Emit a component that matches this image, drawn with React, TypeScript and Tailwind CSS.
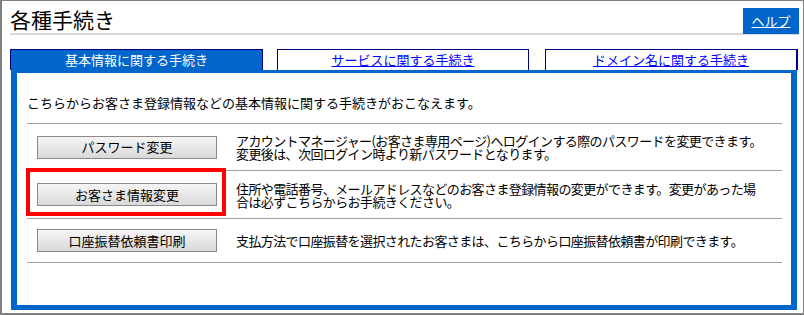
import React from "react";

const rows = [
  {
    label: "パスワード変更",
    lines: [
      "アカウントマネージャー(お客さま専用ページ)へログインする際のパスワードを変更できます。",
      "変更後は、次回ログイン時より新パスワードとなります。",
    ],
    marked: false,
  },
  {
    label: "お客さま情報変更",
    lines: [
      "住所や電話番号、メールアドレスなどのお客さま登録情報の変更ができます。変更があった場",
      "合は必ずこちらからお手続きください。",
    ],
    marked: true,
  },
  {
    label: "口座振替依頼書印刷",
    lines: ["支払方法で口座振替を選択されたお客さまは、こちらから口座振替依頼書が印刷できます。"],
    marked: false,
  },
];

export default function App() {
  return (
    <div
      className="w-[804px] h-[315px] bg-white border-t border-r border-l-2 border-b-2 border-[#808080] text-black overflow-hidden"
      style={{ fontFamily: '"Noto Sans CJK JP", "Noto Sans", sans-serif' }}
    >
      {/* Header */}
      <div className="ml-[8px] mr-[4px] h-[34px] flex items-end justify-between border-b-2 border-[#d9d9d9]">
        <h1 className="text-[21px] leading-[21px] pb-[3px] font-normal">各種手続き</h1>
        <a
          href="#"
          className="w-[56px] h-[26px] mb-[-1px] bg-[#0066cc] text-white text-[13px] leading-[26px] text-center underline"
        >
          ヘルプ
        </a>
      </div>

      {/* Tabs */}
      <div className="ml-[8px] mt-[14px] flex text-[13px] leading-[14px]">
        <div className="w-[253px] h-[21px] bg-[#0066cc] border-t border-x border-[#000080] text-white flex items-center justify-center">
          基本情報に関する手続き
        </div>
        <div className="ml-[14px] w-[252px] h-[21px] bg-white border-t border-x border-[#000080] flex items-center justify-center">
          <a href="#" className="text-[#0000ff] underline">
            サービスに関する手続き
          </a>
        </div>
        <div className="ml-[16px] w-[253px] h-[21px] bg-white border-t border-r-2 border-l border-[#000080] flex items-center justify-center">
          <a href="#" className="text-[#0000ff] underline">
            ドメイン名に関する手続き
          </a>
        </div>
      </div>

      {/* Panel */}
      <div className="ml-[9px] w-[786px] h-[240px] border-t-[3px] border-x-[6px] border-b-[5px] border-[#0066cc] pl-[10px] pr-[9px] text-[13px] leading-[14px]">
        <p className="pt-[23px] pb-[13px] border-b border-[#a0a0a0]">
          こちらからお客さま登録情報などの基本情報に関する手続きがおこなえます。
        </p>
        {rows.map((row, i) => (
          <div
            key={row.label}
            className={`flex items-center border-b border-[#a0a0a0] ${
              i === 0 ? "h-[47px]" : i === 1 ? "h-[48px]" : "h-[44px]"
            }`}
          >
            <div className="relative ml-[10px]">
              <button className="w-[180px] h-[23px] border border-[#8a8a8a] bg-gradient-to-b from-[#f6f6f6] to-[#d9d9d9] text-[13px] leading-[14px] text-black">
                {row.label}
              </button>
              {row.marked && (
                <div className="absolute -left-[11px] -top-[15px] w-[200px] h-[48px] border-4 border-[#ff0000]" />
              )}
            </div>
            <p className="ml-[19px] whitespace-nowrap tracking-[-0.6px] leading-[13px]">
              {row.lines[0]}
              {row.lines[1] && (
                <>
                  <br />
                  {row.lines[1]}
                </>
              )}
            </p>
          </div>
        ))}
      </div>
    </div>
  );
}
